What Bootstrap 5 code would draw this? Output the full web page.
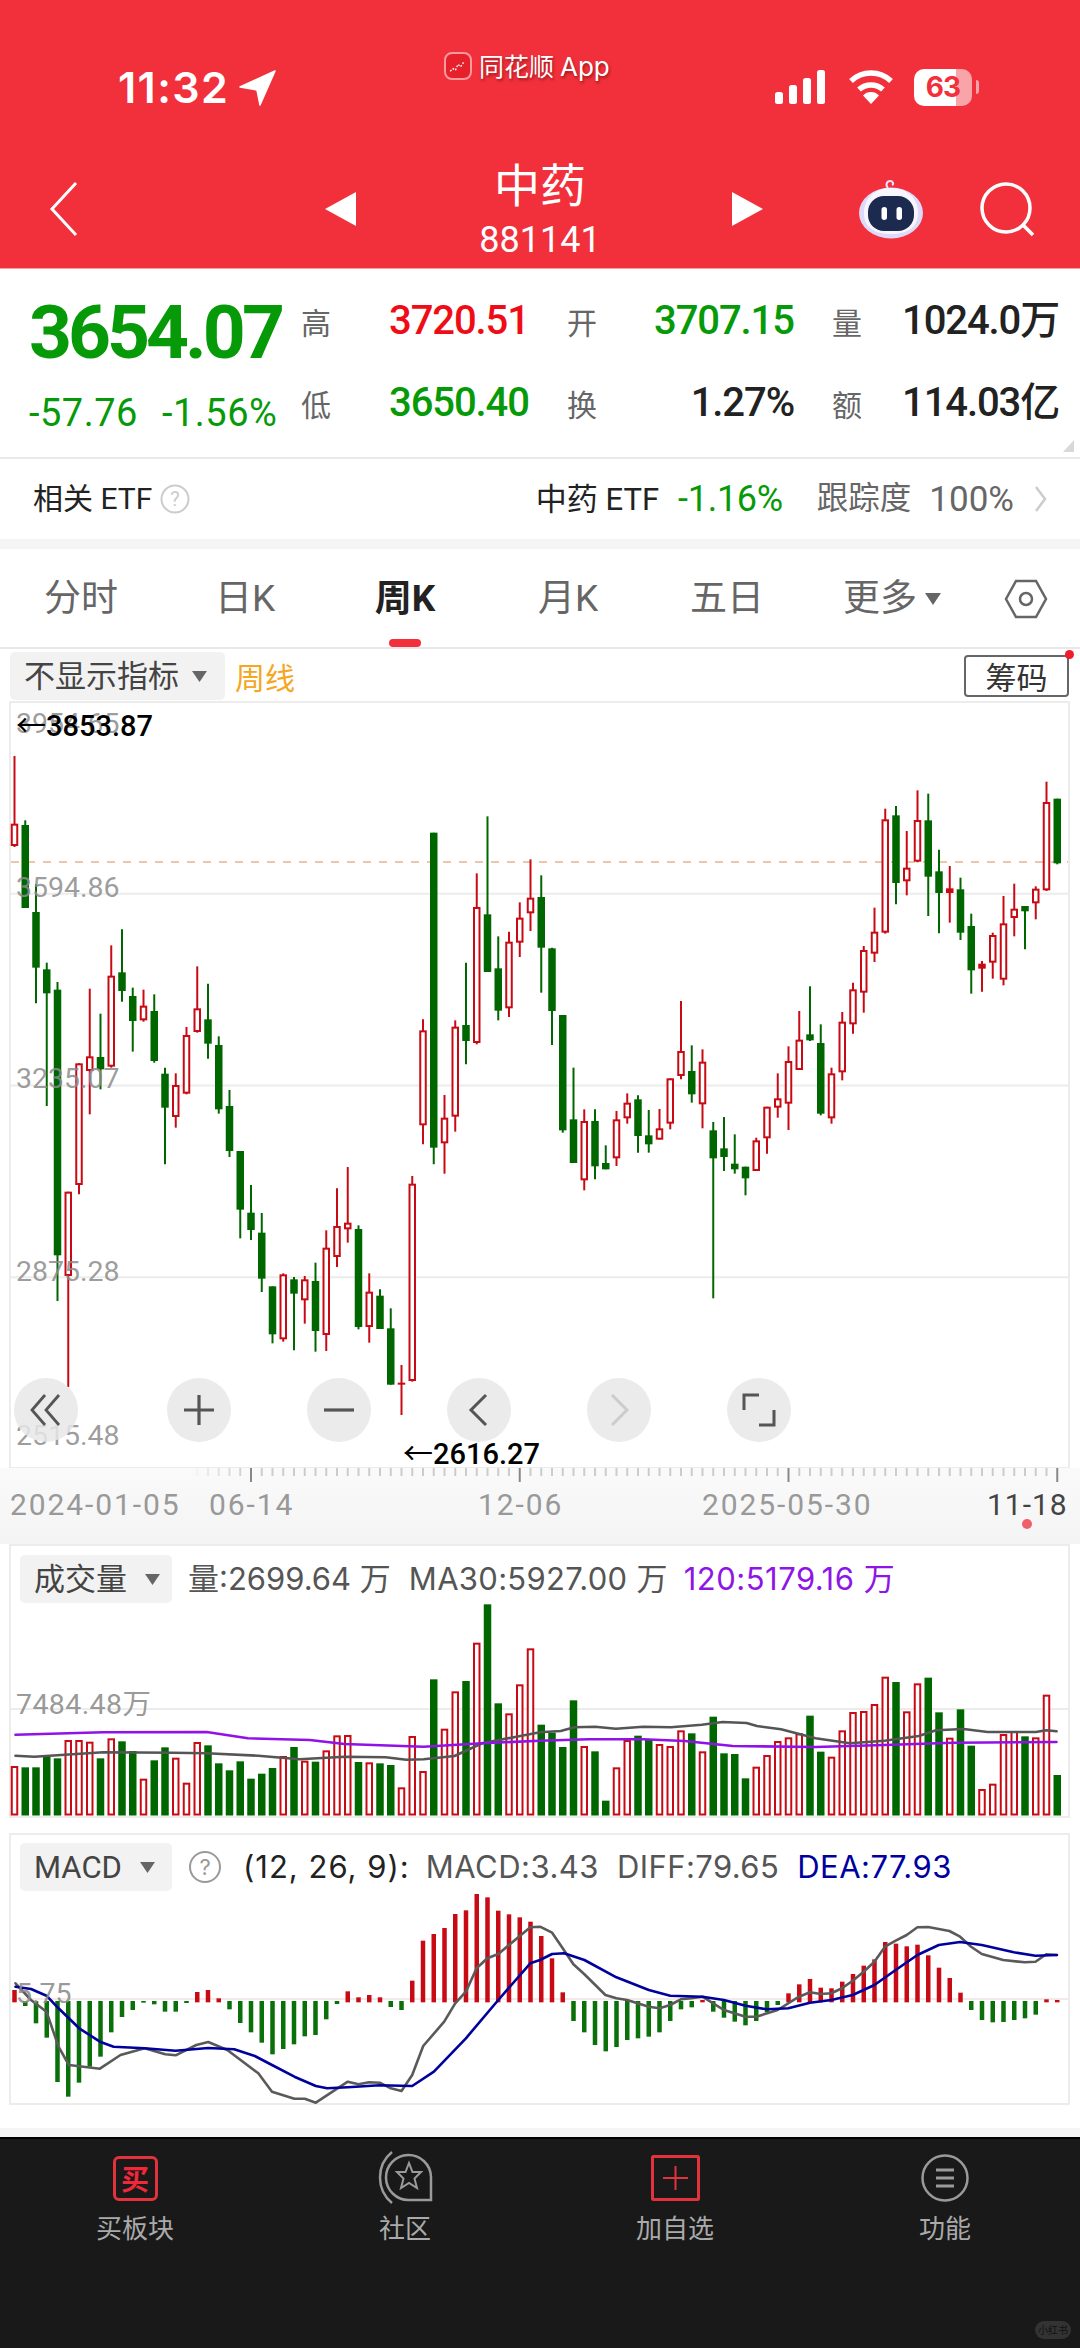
<!DOCTYPE html>
<html lang="zh">
<head>
<meta charset="utf-8">
<title>中药 881141</title>
<link href="https://cdn.jsdelivr.net/npm/bootstrap@5.3.0/dist/css/bootstrap.min.css" rel="stylesheet">
<style>
html,body{margin:0;background:#fff}
body{width:1080px;height:2348px;overflow:hidden;font-family:Roboto,"Noto Sans CJK SC",sans-serif;color:#222}
svg{display:block;overflow:visible}
.hdr{background:#f1303b;height:269px;color:#fff;border-bottom:1px solid #f8a0a6}
.sb{height:160px}
.sb-time{margin:64px 0 0 118px;font:600 43px/46px Inter,sans-serif;letter-spacing:1.4px;width:122px;white-space:nowrap}
.sb-arrow{margin:70px 0 0 0}
.sb-app{margin:50px 0 0 168px;height:32px;font:400 25px/32px "Noto Sans CJK SC",sans-serif;text-shadow:1px 2px 3px rgba(90,0,0,.55);gap:7px;width:331px;white-space:nowrap}
.sb-app b{font:400 26px/32px Inter,sans-serif;margin-left:6px}
.sb-logo{width:28px;height:28px;border-radius:8px;background:#e7212c;border:2px solid #fa9a9f}
.sb-bars{margin:70px 0 0 0}
.sb-wifi{margin:70px 0 0 21px}
.sb-batt{margin:69px 0 0 20px;width:58px;height:37px;border-radius:10px;background:linear-gradient(90deg,#fff 72%,#f9a4a9 72%);color:#f1303b;font:700 28px/37px Inter,sans-serif;text-align:center;letter-spacing:-1px}
.sb-cap{margin:80px 0 0 4px;width:3px;height:14px;border-radius:0 3px 3px 0;background:#f9a4a9}
.nv{height:98px}
.nv-back{margin-left:50px}
.nv-l{margin-left:247px}
.nv-title{width:368px;margin-right:8px;text-align:center}
.nv-name{font:400 46px/44px "Noto Sans CJK SC",sans-serif;margin-bottom:18px}
.nv-code{font:400 36px/36px Roboto,sans-serif}
.nv-bot{margin-left:96px}
.nv-sr{margin-left:57px}
.quote{display:grid;grid-template-columns:272px 88px 178px 87px 178px 70px auto;grid-template-rows:82px 82px;padding:11px 0 14px 29px;align-items:center;position:relative;border-bottom:2px solid #e9e9e9;height:190px}
.q-price{font:700 75px/60px Roboto,sans-serif;letter-spacing:-4px;color:#079a08;align-self:end}
.q-chg{font:400 38px/62px Roboto,sans-serif;align-self:end;color:#079a08;white-space:nowrap;gap:24px;letter-spacing:.5px}
.q-lab{font:400 30px/1 "Noto Sans CJK SC",sans-serif;color:#666}
.q-val{font:500 40px/1 Roboto,"Noto Sans CJK SC",sans-serif;letter-spacing:-1.1px;white-space:nowrap}
.q-val.up{color:#f00c16}.q-val.dn{color:#079a08}
.q-r{padding-right:38px;text-align:right}
.q-corner{position:absolute;right:6px;bottom:5px}
.etf{height:80px;padding:0 33px;font:400 30px/1 Roboto,"Noto Sans CJK SC",sans-serif}
.etf-help{margin-left:8px}
.etf-n{font-size:31px}
.etf-g{color:#079a08;margin-left:19px;font-size:36px;letter-spacing:-.3px}
.etf-m{color:#666}
.etf-t{margin-left:34px;font-size:31.500px}
.etf-p{margin-left:18px;font-size:35px}
.etf-c{margin-left:21px}
.gap-band{height:10px;background:#f5f5f5}
.tabs{display:grid;grid-template-columns:162px 166px 154px 172px 146px 184px 84px;height:100px;border-bottom:2px solid #e8e8e8;flex-wrap:nowrap}
.tabs a{padding:0;color:#666;text-align:center;font:400 37px/100px Roboto,"Noto Sans CJK SC",sans-serif;position:relative;display:flex;justify-content:center;align-items:center;gap:8px}
.tabs a.on{color:#222;font-weight:700}
.tabs a.on::after{content:"";position:absolute;left:50%;margin-left:-16px;top:90px;width:32px;height:8px;border-radius:4px;background:#f1303b}
.tool{height:52px;padding:2px 11px 0 10px}
.chip{background:#f2f2f2;border-radius:5px;color:#444;font:400 31px/1 Roboto,"Noto Sans CJK SC",sans-serif;height:48px;white-space:nowrap}
.chip1{width:215px;padding-left:14px;gap:13px}
.zq{color:#f5a623;font:400 30px/1 "Noto Sans CJK SC",sans-serif;margin-left:10px}
.cm{width:105px;height:42px;padding:0;font:400 31px/38px "Noto Sans CJK SC",sans-serif;border:2px solid #666;border-radius:4px;color:#333;position:relative;background:#fff}
.cm i{position:absolute;right:-7px;top:-7px;width:9px;height:9px;border-radius:50%;background:#f01c2b}
.frame{margin-left:9px;width:1061px;border:2px solid #ececec;background:#fff}
.f-main{height:768px;position:relative}
.zb{position:absolute;left:2.500px;top:675px;gap:76px}
.zb span{width:64px;height:64px;border-radius:50%;background:rgba(232,232,232,.85);display:flex;align-items:center;justify-content:center}
.zb span:first-child{margin-right:13px}
.axis{height:76px;background:linear-gradient(#fafafa,#f4f4f4);position:relative;margin-top:-1px}
.ax-row{display:grid;grid-template-columns:199px 269px 224px 285px auto;padding-left:10px;font:400 30px/34px Roboto,sans-serif;color:#999;letter-spacing:1.900px;height:34px;white-space:nowrap}
.ax-row .cur{color:#444;letter-spacing:1px}
.ax-dot{position:absolute;left:1022px;top:51px;width:10px;height:10px;border-radius:50%;background:#f0606a}
.panel-h{height:58px;padding:9px 0 0 9px;font:400 31px/47px Inter,"Noto Sans CJK SC",sans-serif;color:#555;white-space:nowrap}
.ph-macd{padding-top:8px}
.chip2{width:152px;padding-left:14px;gap:18px;font-size:31px}
.t-pur{color:#8f14e6;letter-spacing:.5px}.t-blue{color:#0000a0;margin-left:18px;letter-spacing:.5px}.t-dark{color:#222;margin-left:21px;letter-spacing:1px}
.t-ma{margin-left:18px;letter-spacing:.3px}
.t-macd{margin-left:16px;letter-spacing:.5px}
.t-diff{margin-left:18px;letter-spacing:.4px}
.gap17{height:15px}
.pad23{height:23px}
.band2{height:9px;background:#f5f5f5;border-bottom:0}
.foot{background:#191919;height:211px;border-top:2px solid #000;color:#aaa;position:relative}
.ft-item{text-align:center;font:400 26px/30px "Noto Sans CJK SC",sans-serif;padding-top:13px}
.ft-ic{height:52px;margin-bottom:8px;display:flex;justify-content:center;align-items:center}
.ic-buy{width:45px;height:45px;border:3px solid #e2323c;border-radius:6px;color:#f0283a;font:700 28px/39px "Noto Sans CJK SC",sans-serif;text-align:center}
.wm{position:absolute;right:9px;bottom:9px;width:36px;height:18px;border-radius:9px;background:#333;color:#111;font:400 10px/18px "Noto Sans CJK SC",sans-serif;text-align:center}
.ctxt{font-family:Roboto,"Noto Sans CJK SC",sans-serif}
.cjk{font-family:"Noto Sans CJK SC",sans-serif}
</style>
</head>
<body>
<header class="hdr">
  <div class="sb d-flex align-items-start">
    <div class="sb-time">11:32</div>
    <svg class="sb-arrow" width="36" height="36" viewBox="0 0 36 36"><polygon points="35,1 0,17 17,20 20,35" fill="#fff" stroke="#fff" stroke-width="1.500" stroke-linejoin="round"/></svg>
    <div class="sb-app d-flex align-items-center">
      <svg class="sb-logo" viewBox="0 0 28 28"><path d="M5 20l3-3 3 2 3-7 3 3 4-6" stroke="#fff" stroke-width="1.600" fill="none" stroke-dasharray="2 2"/></svg>
      <span>同花顺<b>App</b></span>
    </div>
    <svg class="sb-bars" width="52" height="34" viewBox="0 0 52 34"><rect x="0" y="22" width="8" height="12" rx="2.500" fill="#fff"/><rect x="14" y="15" width="8" height="19" rx="2.500" fill="#fff"/><rect x="28" y="8" width="8" height="26" rx="2.500" fill="#fff"/><rect x="42" y="0" width="8" height="34" rx="2.500" fill="#fff"/></svg>
    <svg class="sb-wifi" width="46" height="34" viewBox="0 0 46 34"><path d="M3 11A29 29 0 0 1 43 11M11 19.500A18 18 0 0 1 35 19.500" stroke="#fff" stroke-width="5.500" fill="none"/><path d="M23 34l-8-8.500a11 11 0 0 1 16 0z" fill="#fff"/></svg>
    <div class="sb-batt">63</div>
    <div class="sb-cap"></div>
  </div>
  <nav class="nv d-flex align-items-center">
    <svg class="nv-back" width="28" height="54" viewBox="0 0 28 54"><path d="M26 1L2 27l24 26" stroke="#fff" stroke-width="3" fill="none"/></svg>
    <svg class="nv-l" width="31" height="34" viewBox="0 0 31 34"><polygon points="31,0 31,34 0,17" fill="#fff"/></svg>
    <div class="nv-title"><div class="nv-name">中药</div><div class="nv-code">881141</div></div>
    <svg width="31" height="34" viewBox="0 0 31 34"><polygon points="0,0 0,34 31,17" fill="#fff"/></svg>
    <svg class="nv-bot" width="64" height="60" viewBox="0 0 64 60">
      <path d="M29 9c-3-3-1-7 2-7s4 3 2 4" stroke="#e8e4ff" stroke-width="2" fill="none"/>
      <ellipse cx="32" cy="34" rx="32" ry="25.500" fill="#ded9fb"/>
      <path d="M32 9c16 0 27 10 27 25s-11 21-27 21S5 49 5 34 16 9 32 9z" fill="#f7f6ff"/>
      <rect x="9" y="17" width="46" height="35" rx="16" fill="#1b2a4e"/>
      <rect x="22.500" y="28" width="5.500" height="13" rx="2.700" fill="#fff"/><rect x="37.500" y="28" width="5.500" height="13" rx="2.700" fill="#fff"/>
    </svg>
    <svg class="nv-sr" width="56" height="54" viewBox="0 0 56 54"><circle cx="26" cy="26" r="24" stroke="#fff" stroke-width="3.500" fill="none"/><path d="M42 42l11 11" stroke="#fff" stroke-width="3.500"/></svg>
  </nav>
</header>

<section class="quote">
  <div class="q-price">3654.07</div><div class="q-lab">高</div><div class="q-val up">3720.51</div><div class="q-lab">开</div><div class="q-val dn">3707.15</div><div class="q-lab">量</div><div class="q-val">1024.0万</div>
  <div class="q-chg d-flex"><span>-57.76</span><span>-1.56%</span></div><div class="q-lab">低</div><div class="q-val dn">3650.40</div><div class="q-lab">换</div><div class="q-val q-r">1.27%</div><div class="q-lab">额</div><div class="q-val">114.03亿</div>
  <svg class="q-corner" width="11" height="12" viewBox="0 0 11 12"><polygon points="11,0 11,12 0,12" fill="#d8d8d8"/></svg>
</section>

<section class="etf d-flex align-items-center">
  <span>相关 ETF</span>
  <svg class="etf-help" width="30" height="30" viewBox="0 0 30 30"><circle cx="15" cy="15" r="13.500" fill="none" stroke="#ccc" stroke-width="2"/><text x="15" y="22" text-anchor="middle" font-size="20" fill="#ccc">?</text></svg>
  <span class="ms-auto etf-n">中药 ETF</span><span class="etf-g">-1.16%</span>
  <span class="etf-m etf-t">跟踪度</span><span class="etf-m etf-p">100%</span>
  <svg class="etf-c" width="12" height="26" viewBox="0 0 12 26"><path d="M1 1l9 12-9 12" stroke="#ccc" stroke-width="2.500" fill="none"/></svg>
</section>
<div class="gap-band"></div>

<nav class="nav tabs">
  <a class="nav-link">分时</a><a class="nav-link">日K</a><a class="nav-link on">周K</a><a class="nav-link">月K</a><a class="nav-link">五日</a>
  <a class="nav-link">更多<svg width="16" height="12" viewBox="0 0 16 12"><polygon points="0,0 16,0 8,12" fill="#666"/></svg></a>
  <a class="nav-link"><svg width="44" height="40" viewBox="0 0 44 40"><polygon points="12,2 32,2 42,20 32,38 12,38 2,20" fill="none" stroke="#666" stroke-width="2.500"/><circle cx="22" cy="20" r="6" fill="none" stroke="#666" stroke-width="2.500"/></svg></a>
</nav>

<div class="tool d-flex align-items-center">
  <div class="chip chip1 d-flex align-items-center">不显示指标<svg width="15" height="11" viewBox="0 0 15 11"><polygon points="0,0 15,0 7.500,11" fill="#666"/></svg></div>
  <span class="zq">周线</span>
  <button type="button" class="btn cm ms-auto">筹码<i></i></button>
</div>

<div class="frame f-main">
  <svg id="mainSvg" width="1057" height="764" viewBox="11 702 1057 764"></svg>
  <div class="zb d-flex">
    <span><svg width="32" height="32" viewBox="0 0 32 32"><path d="M15 1L2 16l13 15M29 1L16 16l13 15" stroke="#555" stroke-width="2.800" fill="none"/></svg></span>
    <span><svg width="32" height="32" viewBox="0 0 32 32"><path d="M16 1v30M1 16h30" stroke="#555" stroke-width="3.200"/></svg></span>
    <span><svg width="32" height="32" viewBox="0 0 32 32"><path d="M1 16h30" stroke="#555" stroke-width="3.200"/></svg></span>
    <span><svg width="20" height="32" viewBox="0 0 20 32"><path d="M17 1L2 16l15 15" stroke="#555" stroke-width="3" fill="none"/></svg></span>
    <span><svg width="20" height="32" viewBox="0 0 20 32"><path d="M3 1l15 15L3 31" stroke="#ccc" stroke-width="3" fill="none"/></svg></span>
    <span><svg width="34" height="34" viewBox="0 0 34 34"><path d="M2 17V2h15M32 17v15H17" stroke="#555" stroke-width="3" fill="none"/></svg></span>
  </div>
</div>
<div class="axis">
  <svg id="tickSvg" width="1080" height="20" viewBox="0 0 1080 20"></svg>
  <div class="ax-row"><span>2024-01-05</span><span>06-14</span><span>12-06</span><span>2025-05-30</span><span class="cur">11-18</span></div>
  <div class="ax-dot"></div>
</div>

<div class="frame">
  <div class="panel-h d-flex">
    <div class="chip chip2 d-flex align-items-center">成交量<svg width="15" height="11" viewBox="0 0 15 11"><polygon points="0,0 15,0 7.500,11" fill="#666"/></svg></div>
    <span class="ms-3">量:2699.64 万</span><span class="t-ma">MA30:5927.00 万</span><span class="ms-3 t-pur">120:5179.16 万</span>
  </div>
  <svg id="volSvg" width="1057" height="212" viewBox="11 1604 1057 212"></svg>
</div>
<div class="gap17"></div>
<div class="frame">
  <div class="panel-h ph-macd d-flex">
    <div class="chip chip2 d-flex align-items-center">MACD<svg width="15" height="11" viewBox="0 0 15 11"><polygon points="0,0 15,0 7.500,11" fill="#666"/></svg></div>
    <svg class="ms-3" width="34" height="47" viewBox="0 0 34 47"><circle cx="17" cy="24" r="15" fill="none" stroke="#999" stroke-width="2"/><text x="17" y="32" text-anchor="middle" font-size="22" fill="#999">?</text></svg>
    <span class="t-dark">(12, 26, 9):</span><span class="t-macd">MACD:3.43</span><span class="t-diff">DIFF:79.65</span><span class="t-blue">DEA:77.93</span>
  </div>
  <svg id="macdSvg" width="1057" height="210" viewBox="11 1893 1057 210"></svg>
</div>
<div class="pad23"></div>
<div class="band2"></div>

<footer class="foot">
  <div class="row g-0">
    <div class="col-3 ft-item"><div class="ft-ic"><div class="ic-buy">买</div></div>买板块</div>
    <div class="col-3 ft-item"><div class="ft-ic"><svg width="54" height="52" viewBox="378 2153 54 52" fill="none" stroke="#9a9a9a" stroke-width="2.500"><path d="M431 2201H409A22.500 22.500 0 1 1 431 2178Z"/><path d="M392 2153C376 2166 376 2191 392 2204"/><polygon stroke-width="2" points="409,2164 412.500,2173 421,2173 414.500,2179.500 417,2189 409,2184 401,2189 403.500,2179.500 397,2173 405.500,2173"/></svg></div>社区</div>
    <div class="col-3 ft-item"><div class="ft-ic"><svg width="49" height="46" viewBox="0 0 49 46" fill="none" stroke="#e2323c"><rect x="1.500" y="1.500" width="46" height="43" rx="1" stroke-width="3"/><path d="M24.500 11v24M12 23h25" stroke-width="2"/></svg></div>加自选</div>
    <div class="col-3 ft-item"><div class="ft-ic"><svg width="48" height="48" viewBox="0 0 48 48" fill="none" stroke="#9a9a9a"><circle cx="24" cy="24" r="22.500" stroke-width="2.500"/><path d="M15 16h18M15 24h18M15 32h18" stroke-width="3"/></svg></div>功能</div>
  </div>
  <div class="wm">小红书</div>
</footer>

<script>
const NS='http://www.w3.org/2000/svg';
const X=i=>14.5+10.75*i;
const RED='#c80a14',GRN='#006600';
function add(p,t,a,txt){const e=document.createElementNS(NS,t);for(const k in a)e.setAttribute(k,a[k]);if(txt!=null)e.textContent=txt;p.appendChild(e);return e;}
function text(p,x,y,s,fill,size,w){add(p,'text',{x,y,fill,'font-size':size,'font-weight':w||400,class:'ctxt'},s);}
function atext(p,x,y,s){const e=add(p,'text',{x,y,fill:'#000','font-size':30,'font-weight':500,class:'ctxt'});add(e,'tspan',{class:'cjk','font-weight':400},'←');add(e,'tspan',{'font-size':29},s);}
/* candles: type,high,bodyTop,bodyBottom,low in zoom-row units */
const K=[
'r165,368,435,438','g358,372,621,621','g550,633,800,907','g785,805,877,1215','g843,866,1663,1800','r1472,1472,1725,2058','r1087,1087,1452,1480','r863,1066,1110,1240','g938,1068,1105,1165','r733,824,1097,1100',
'g685,814,870,902','g860,885,960,1052','r866,914,958,962','g880,930,1080,1085','g1100,1118,1220,1390','r1117,1152,1248,1280','r978,1002,1178,1180','r796,922,993,995','g848,955,1028,1073','g1006,1032,1225,1238',
'g1167,1215,1350,1368','g1350,1350,1526,1612','g1452,1535,1587,1617','g1536,1595,1733,1773','g1756,1756,1900,1927','r1717,1720,1915,1922','g1728,1735,1778,1948','r1725,1735,1798,1868','g1685,1740,1890,1952','r1588,1640,1902,1950',
'r1462,1575,1668,1698','r1398,1565,1585,1625','g1573,1584,1878,1885','r1717,1772,1878,1925','g1765,1784,1884,1884','g1822,1882,2051,2051','r1992,2045,2047,2142','r1425,1448,2040,2042','r955,988,1273,1330','g395,395,1340,1390',
'r1182,1250,1327,1418','r958,977,1247,1292','g785,972,1020,1090','r517,618,1026,1030','g346,640,813,813','g706,802,929,958','r692,722,922,948','r604,650,725,768','r475,590,637,690','g523,588,740,875',
'g740,742,930,1032','g942,942,1288,1295','g1100,1255,1386,1386','r1225,1260,1438,1468','g1225,1260,1396,1435','g1333,1386,1405,1405','r1230,1255,1372,1395','r1177,1205,1252,1268','g1183,1195,1305,1355','g1227,1303,1330,1355',
'r1224,1282,1316,1316','r1132,1132,1268,1285','r900,1050,1125,1135','g1033,1110,1180,1205','r1045,1082,1210,1282','g1263,1288,1372,1792','g1248,1342,1368,1410','g1300,1388,1405,1418','g1397,1397,1432,1483','r1310,1318,1410,1410',
'r1217,1217,1312,1358','r1117,1192,1220,1250','r1036,1080,1208,1287','r930,1016,1107,1107','g856,1000,1018,1020','g970,1026,1238,1243','r1100,1117,1252,1268','r933,962,1114,1138','r845,865,970,998','r735,747,875,935',
'r620,692,758,783','r323,355,695,698','g315,343,546,610','r390,500,541,583','r268,357,482,484','g278,358,527,645','g446,511,576,697','r495,562,576,665','g530,565,695,717','g638,675,808,878',
'r780,788,803,872','r695,702,785,833','r585,667,836,853','r548,623,651,706','g615,615,631,745','r556,563,607,655','r242,303,568,570','g293,293,487,490'
].map(s=>{const a=s.slice(1).split(',').map(v=>700+v/3);return {c:s[0],h:a[0],t:a[1],b:a[2],l:a[3]};});
const m=document.getElementById('mainSvg');
[892.7,1084.6,1276.3].forEach(y=>add(m,'line',{x1:11,x2:1068,y1:y,y2:y,stroke:'#ececec','stroke-width':2}));
add(m,'line',{x1:11,x2:1068,y1:861,y2:861,stroke:'#e2b88c','stroke-width':1.5,'stroke-dasharray':'8 8'});
K.forEach((k,i)=>{const x=X(i),col=k.c=='r'?RED:GRN;
 add(m,'line',{x1:x,x2:x,y1:k.h,y2:k.l,stroke:col,'stroke-width':2});
 const h=k.b-k.t;
 if(k.c=='g'||h<=6) add(m,'rect',{x:x-3.75,y:k.t,width:7.5,height:Math.max(h,2),fill:col});
 else add(m,'rect',{x:x-2.75,y:k.t+1,width:5.5,height:h-2,fill:'#fff',stroke:col,'stroke-width':2});
});
[[732,'3954.65'],[896,'3594.86'],[1087,'3235.07'],[1280,'2875.28'],[1444,'2515.48']].forEach(a=>text(m,16,a[0],a[1],'rgba(140,140,140,.85)',28.500));
atext(m,16,735,'3853.87');
atext(m,403,1463,'2616.27');
/* ticks */
const t=document.getElementById('tickSvg');
for(let i=17;i<98;i++){const M=(i-22)%25==0;
 add(t,'line',{x1:X(i),x2:X(i),y1:0,y2:M?14:8,stroke:M?'#888':'#ccc','stroke-width':2,opacity:i<22?(i-16)/6:1});}
/* volume */
const V='r708,g712,g712,g680,g685,r630,r630,r635,g685,r625,g634,g663,r746,g691,g652,r683,r758,r636,g646,g700,g721,g694,g746,g731,g714,r678,g651,r692,g695,r661,r616,r615,g696,r697,g700,g705,r772,r618,r723,g448,r596,r484,g453,r338,g223,g520,r550,r463,r355,g584,g608,g651,g511,r648,g664,g812,r712,r630,g617,g630,r642,r648,r601,g610,r664,g560,g670,g672,g745,r710,r675,r633,r622,r610,g557,g665,r680,r601,r546,r543,r522,r440,g456,r544,r460,g443,g547,r623,g538,g647,r777,r761,r612,r603,g619,r622,r494,g735'.split(',');
const v=document.getElementById('volSvg'),vy=y=>1530+y/3;
add(v,'line',{x1:11,x2:1068,y1:1709,y2:1709,stroke:'#ececec','stroke-width':2});
V.forEach((s,i)=>{const x=X(i),y=vy(+s.slice(1)),c=s[0];
 if(c=='g') add(v,'rect',{x:x-3.75,y,width:7.5,height:1815.5-y,fill:GRN});
 else add(v,'rect',{x:x-2.75,y:y+1,width:5.5,height:1814.5-y-1,fill:'#fff',stroke:RED,'stroke-width':2});});
const pts=(a,b,fy)=>[...a.map(p=>[p[0]/2.904,fy(p[1])]),...b.map(p=>[540+p[0]/2.904,fy(p[1])])].map(p=>p[0].toFixed(1)+','+p[1].toFixed(1)).join(' ');
const pl=(p,points,stroke)=>add(p,'polyline',{points,stroke,fill:'none','stroke-width':2.600,'stroke-linejoin':'round','stroke-linecap':'round'});
pl(v,pts([[45,677],[100,680],[300,667],[500,668],[600,670],[750,677],[870,688],[1000,680],[1120,682],[1180,689],[1230,688],[1320,678],[1400,640],[1500,620]],[[0,607],[60,603],[100,592],[160,590],[220,596],[300,590],[380,592],[470,584],[530,576],[600,579],[630,588],[700,598],[800,625],[900,640],[1000,632],[1100,618],[1150,601],[1230,597],[1300,606],[1440,606],[1470,601],[1500,604]],vy),'#555');
pl(v,pts([[45,614],[300,607],[600,606],[720,625],[900,630],[1000,642],[1230,650],[1400,640]],[[0,632],[140,628],[300,628],[420,633],[560,648],[800,651],[1000,645],[1200,638],[1500,636]],vy),'#9012e8');
add(v,'text',{x:16,y:1714,fill:'rgba(140,140,140,.9)','font-size':28.500,class:'ctxt','letter-spacing':.4},'7484.48万');
/* macd */
const D='r510,g558,g610,g653,g786,g830,g788,g740,g710,g637,g591,g570,g548,g553,g575,g575,g549,r516,r510,r535,g568,g609,g637,g668,g703,g687,g673,g649,g645,g598,g552,r514,r532,r525,r532,g561,g570,r482,r362,r342,r324,r282,r271,r222,r232,r272,r283,r292,r305,r348,r415,r517,g603,g637,g675,g694,g681,g660,g655,g650,g637,g603,g568,g562,r540,g575,g593,g605,g616,g603,g577,g555,r520,r493,r477,r503,r505,r485,r462,r437,r418,r366,r371,r379,r374,r406,r443,r474,r518,g570,g600,g607,g606,g600,g595,g584,r538,r540'.split(',');
const d=document.getElementById('macdSvg'),dy=y=>1820+y/3;
add(d,'line',{x1:11,x2:1068,y1:1999,y2:1999,stroke:'#f4e8e8','stroke-width':2});
D.forEach((s,i)=>{const x=X(i),y=dy(+s.slice(1));
 if(s[0]=='g') add(d,'rect',{x:x-2.25,y:dy(543),width:4.5,height:y-dy(543),fill:'#0a700a'});
 else add(d,'rect',{x:x-2.25,y,width:4.5,height:dy(547)-y,fill:RED});});
pl(d,pts([[45,490],[90,540],[135,575],[170,680],[200,735],[290,746],[350,705],[420,685],[480,703],[510,706],[570,675],[605,666],[660,690],[750,760],[790,815],[855,836],[885,836],[917,848],[1010,785],[1041,793],[1072,787],[1103,788],[1135,805],[1166,813],[1197,765],[1229,678],[1290,605],[1322,550],[1353,515],[1384,445],[1415,415],[1447,402],[1478,375],[1540,322]],[[0,320],[35,338],[66,385],[97,433],[129,463],[190,525],[222,535],[253,540],[316,560],[347,565],[378,555],[409,538],[440,535],[472,530],[503,550],[534,570],[597,590],[628,590],[690,570],[752,530],[784,517],[815,522],[846,520],[877,505],[908,482],[940,455],[971,425],[1002,380],[1033,362],[1065,345],[1096,322],[1127,321],[1189,333],[1220,350],[1252,380],[1283,402],[1345,420],[1408,427],[1439,425],[1470,403],[1501,405]],dy),'#5a5a5a');
pl(d,pts([[45,500],[90,507],[135,527],[170,565],[230,625],[290,665],[330,680],[420,685],[510,692],[605,684],[680,688],[740,708],[790,735],[855,770],[917,798],[950,805],[1010,802],[1103,796],[1197,798],[1260,755],[1353,655],[1447,540],[1540,430]],[[0,420],[35,402],[70,400],[129,420],[222,472],[316,510],[378,527],[472,530],[534,540],[597,557],[659,568],[721,565],[784,548],[846,540],[908,525],[971,495],[1033,450],[1096,405],[1158,375],[1220,366],[1283,375],[1376,397],[1439,407],[1501,405]],dy),'#00009c');
text(d,16,2003,'5.75','rgba(140,140,140,.9)',28.500);
</script>
<script src="https://cdn.jsdelivr.net/npm/bootstrap@5.3.0/dist/js/bootstrap.bundle.min.js"></script>
</body>
</html>
